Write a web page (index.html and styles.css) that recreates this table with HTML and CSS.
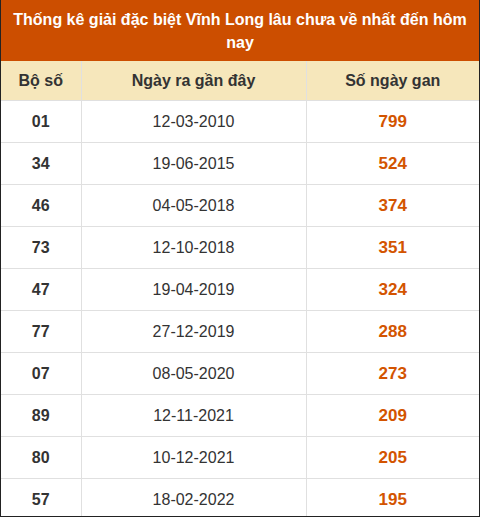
FILE: index.html
```html
<!DOCTYPE html>
<html lang="vi">
<head>
<meta charset="utf-8">
<link rel="stylesheet" href="styles.css">
</head>
<body>
<div class="frame">
  <table class="gan">
    <colgroup><col class="c1"><col class="c2"><col class="c3"></colgroup>
    <thead>
      <tr><th colspan="3" class="title">Thống kê giải đặc biệt Vĩnh Long lâu chưa về nhất đến hôm nay</th></tr>
      <tr class="head"><th>Bộ số</th><th>Ngày ra gần đây</th><th>Số ngày gan</th></tr>
    </thead>
    <tbody>
      <tr><td class="num">01</td><td class="date">12-03-2010</td><td class="days">799</td></tr>
      <tr><td class="num">34</td><td class="date">19-06-2015</td><td class="days">524</td></tr>
      <tr><td class="num">46</td><td class="date">04-05-2018</td><td class="days">374</td></tr>
      <tr><td class="num">73</td><td class="date">12-10-2018</td><td class="days">351</td></tr>
      <tr><td class="num">47</td><td class="date">19-04-2019</td><td class="days">324</td></tr>
      <tr><td class="num">77</td><td class="date">27-12-2019</td><td class="days">288</td></tr>
      <tr><td class="num">07</td><td class="date">08-05-2020</td><td class="days">273</td></tr>
      <tr><td class="num">89</td><td class="date">12-11-2021</td><td class="days">209</td></tr>
      <tr><td class="num">80</td><td class="date">10-12-2021</td><td class="days">205</td></tr>
      <tr><td class="num">57</td><td class="date">18-02-2022</td><td class="days">195</td></tr>
    </tbody>
  </table>
</div>
</body>
</html>
```
FILE: styles.css
```css
html, body {
  margin: 0;
  padding: 0;
  background: #fff;
}
.frame {
  width: 480px;
  height: 517px;
  box-sizing: border-box;
  border: 1px solid #222;
  border-top: none;
  overflow: hidden;
  font-family: "Liberation Sans", Arial, sans-serif;
}
.gan {
  width: 478px;
  border-collapse: collapse;
  table-layout: fixed;
}
.c1 { width: 80px; }
.c2 { width: 225px; }
.title {
  background: #cc4e00;
  color: #fff;
  font-size: 16px;
  font-weight: bold;
  line-height: 23px;
  height: 61px;
  padding: 7px 10px;
  box-sizing: border-box;
  text-align: center;
}
.head th {
  background: #f6e7bb;
  color: #333;
  font-size: 16px;
  font-weight: bold;
  height: 39px;
  padding: 0;
  border: 1px solid #e0e0e0;
  border-top: none;
}
.gan td {
  height: 41px;
  padding: 0;
  text-align: center;
  font-size: 16px;
  color: #333;
  border: 1px solid #e0e0e0;
}
.gan tr > :first-child { border-left: none; }
.gan tr > :last-child { border-right: none; }
.gan td.num { font-weight: bold; }
.gan td.days {
  color: #d35400;
  font-weight: bold;
  font-size: 17px;
}
```
